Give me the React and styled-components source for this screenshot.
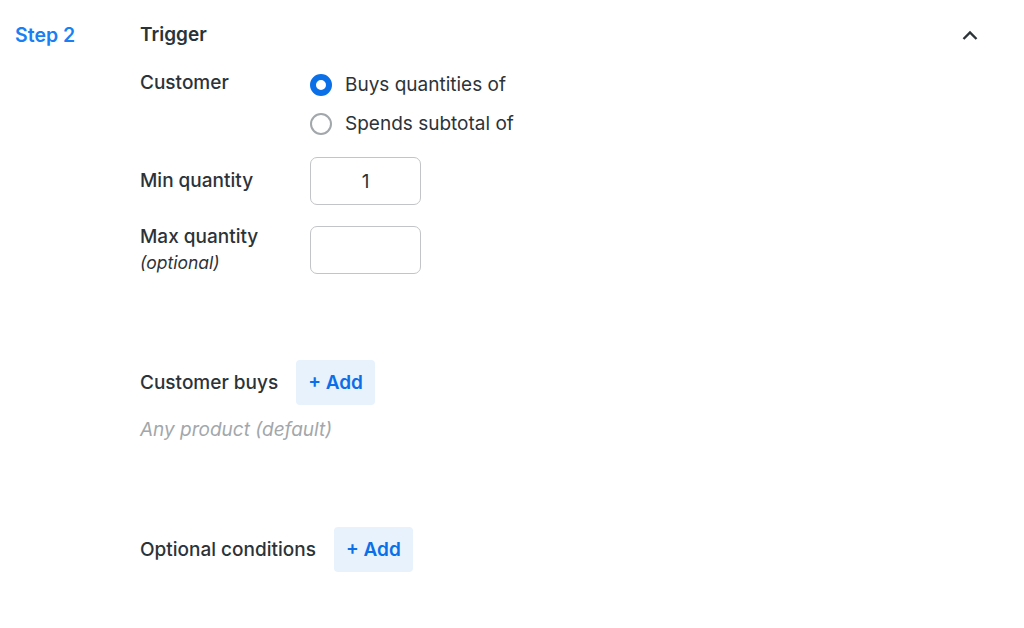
import React from "react";
import styled, { createGlobalStyle } from "styled-components";

const GlobalStyle = createGlobalStyle`
  body {
    margin: 0;
    background: #fff;
    font-family: Inter, "Noto Sans", sans-serif;
    color: #2c3338;
  }
`;

const Page = styled.div`
  display: flex;
  width: 1024px;
  height: 628px;
  box-sizing: border-box;
  padding: 24px 0 0 15px;
`;

const StepLabel = styled.div`
  width: 125px;
  flex-shrink: 0;
  font-size: 19.5px;
  font-weight: 600;
  color: #1a7ff2;
  line-height: 22px;
`;

const Content = styled.div`
  flex: 1;
  display: flex;
  flex-direction: column;
`;

const Title = styled.div`
  font-size: 19px;
  font-weight: 600;
  line-height: 22px;
  margin-bottom: 26px;
`;

const Collapse = styled.button`
  width: 40px;
  height: 24px;
  margin: 0 34px 0 0;
  padding: 0;
  border: none;
  background: none;
  display: flex;
  align-items: center;
  justify-content: center;
  color: #2c3338;
  align-self: flex-start;
`;

const FieldRow = styled.div`
  display: flex;
  align-items: ${(p) => (p.$top ? "flex-start" : "center")};
  margin-bottom: ${(p) => p.$gap || 0}px;
`;

const Label = styled.div`
  width: 170px;
  font-size: 19px;
  font-weight: 500;
  line-height: 22px;
`;

const Hint = styled.div`
  font-size: 17.5px;
  font-style: italic;
  font-weight: 400;
  line-height: 22px;
  margin-top: 4px;
`;

const RadioGroup = styled.div`
  display: flex;
  flex-direction: column;
  gap: 17px;
  margin-top: 2px;
`;

const RadioOption = styled.label`
  display: flex;
  align-items: center;
  gap: 13px;
  font-size: 19px;
  line-height: 22px;
`;

const RadioDot = styled.span`
  width: 22px;
  height: 22px;
  box-sizing: border-box;
  border-radius: 50%;
  border: ${(p) => (p.$checked ? "6.5px solid #0b6fe8" : "2px solid #a2a7ab")};
  background: #fff;
`;

const NumberBox = styled.div`
  width: 111px;
  height: 48px;
  box-sizing: border-box;
  border: 1.5px solid #c3c4c7;
  border-radius: 7px;
  display: flex;
  align-items: center;
  justify-content: center;
  font-size: 19px;
`;

const InlineRow = styled.div`
  display: flex;
  align-items: center;
  gap: 18px;
`;

const InlineLabel = styled.div`
  font-size: 19px;
  font-weight: 500;
  line-height: 22px;
`;

const AddButton = styled.button`
  height: 45px;
  padding: 0 12px;
  border: none;
  border-radius: 4px;
  background: #e7f2fd;
  color: #0b6fe8;
  font-family: Inter, sans-serif;
  font-size: 19px;
  font-weight: 600;
`;

const Muted = styled.div`
  margin-top: 14px;
  font-size: 19px;
  font-style: italic;
  color: #a2a7ab;
  line-height: 22px;
`;

const Section = styled.div`
  margin-top: ${(p) => p.$top}px;
`;

export default function App() {
  return (
    <>
      <GlobalStyle />
      <Page>
        <StepLabel>Step 2</StepLabel>
        <Content>
          <Title>Trigger</Title>
          <FieldRow $top $gap={22}>
            <Label>Customer</Label>
            <RadioGroup>
              <RadioOption>
                <RadioDot $checked />
                Buys quantities of
              </RadioOption>
              <RadioOption>
                <RadioDot />
                Spends subtotal of
              </RadioOption>
            </RadioGroup>
          </FieldRow>
          <FieldRow $gap={21}>
            <Label>Min quantity</Label>
            <NumberBox>1</NumberBox>
          </FieldRow>
          <FieldRow $top>
            <Label>
              Max quantity
              <Hint>(optional)</Hint>
            </Label>
            <NumberBox />
          </FieldRow>
          <Section $top={86}>
            <InlineRow>
              <InlineLabel>Customer buys</InlineLabel>
              <AddButton>+ Add</AddButton>
            </InlineRow>
            <Muted>Any product (default)</Muted>
          </Section>
          <Section $top={86}>
            <InlineRow>
              <InlineLabel>Optional conditions</InlineLabel>
              <AddButton>+ Add</AddButton>
            </InlineRow>
          </Section>
        </Content>
        <Collapse>
          <svg width="20" height="20" viewBox="0 0 20 20" fill="none">
            <path d="M3.5 13 L10 6.5 L16.5 13" stroke="currentColor" strokeWidth="2.4" />
          </svg>
        </Collapse>
      </Page>
    </>
  );
}
